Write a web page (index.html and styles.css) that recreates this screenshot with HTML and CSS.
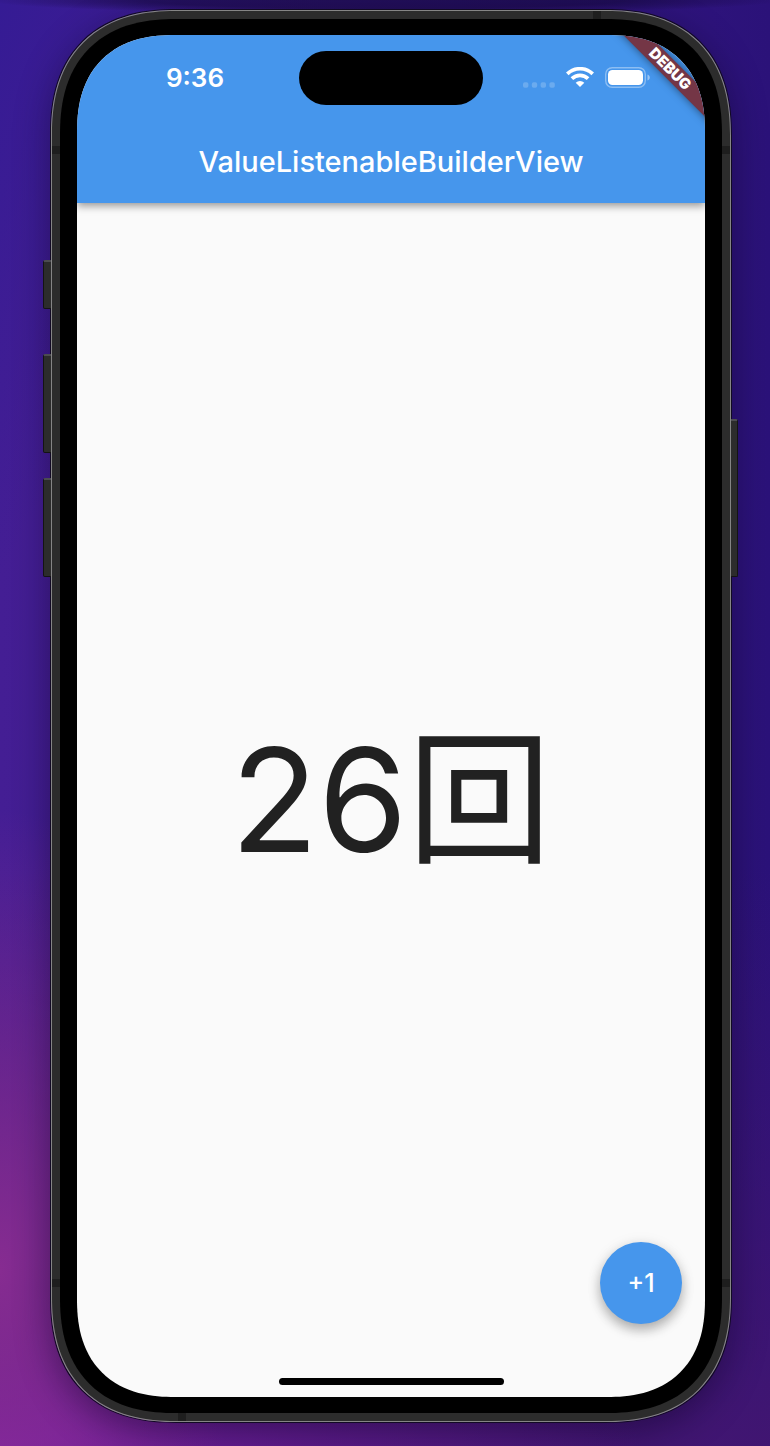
FILE: index.html
```html
<!DOCTYPE html>
<html lang="ja">
<head>
<meta charset="utf-8">
<meta name="viewport" content="width=device-width, initial-scale=1">
<title>ValueListenableBuilderView</title>
<link rel="stylesheet" href="styles.css">
</head>
<body>
<div class="desktop">
  <div class="phone">
    <span class="key key-action"></span>
    <span class="key key-up"></span>
    <span class="key key-down"></span>
    <span class="key key-power"></span>
    <div class="frame">
      <span class="antenna antenna-top"></span>
      <span class="antenna antenna-bottom"></span>
      <span class="antenna antenna-left-high"></span>
      <span class="antenna antenna-left-low"></span>
      <span class="antenna antenna-right-high"></span>
      <span class="antenna antenna-right-low"></span>
      <div class="bezel">
        <div class="screen">
          <header class="app-bar">
            <div class="status-bar">
              <time class="clock">9:36</time>
              <div class="island"></div>
              <div class="indicators">
                <svg class="cellular" width="32" height="6" viewBox="0 0 32 6" aria-hidden="true">
                  <rect x="0" y=".3" width="5.4" height="5.4" rx="1.8"/><rect x="8.8" y=".3" width="5.4" height="5.4" rx="1.8"/><rect x="17.6" y=".3" width="5.4" height="5.4" rx="1.8"/><rect x="26.4" y=".3" width="5.4" height="5.4" rx="1.8"/>
                </svg>
                <svg class="wifi" width="28" height="20" viewBox="0 0 28 20" aria-hidden="true">
                  <path d="M1.3 6.9a18.2 18.2 0 0 1 25.4 0M5.9 11.6a11.6 11.6 0 0 1 16.2 0" fill="none" stroke="#fff" stroke-width="3.7"/>
                  <path d="M14 20l-4.3-4.2a6.2 6.2 0 0 1 8.6 0z" fill="#fff"/>
                </svg>
                <svg class="battery" width="45" height="21" viewBox="0 0 45 21" aria-hidden="true">
                  <rect x=".7" y=".7" width="39.6" height="19.6" rx="6.5" fill="none" stroke="#fff" stroke-opacity=".38" stroke-width="1.4"/>
                  <rect x="3" y="3" width="35" height="15" rx="4.5" fill="#fff"/>
                  <path d="M42.5 7.5c3 1 3 5 0 6z" fill="#fff" fill-opacity=".45"/>
                </svg>
              </div>
            </div>
            <h1 class="title">ValueListenableBuilderView</h1>
          </header>
          <main class="content">
            <p class="count">26回</p>
          </main>
          <button class="fab" type="button">+1</button>
          <div class="home-indicator"></div>
          <div class="debug-banner">DEBUG</div>
        </div>
      </div>
    </div>
  </div>
</div>
</body>
</html>
```
FILE: styles.css
```css
* {
  box-sizing: border-box;
}

body {
  margin: 0;
  font-family: Inter, "Noto Sans CJK JP", sans-serif;
}

.desktop {
  display: flex;
  min-height: 100vh;
  padding: 10px 39px 24px 51px;
  overflow: hidden;
  background:
    radial-gradient(ellipse 400px 14px at 50% 0, rgba(20, 8, 60, 0.6) 60%, transparent),
    radial-gradient(ellipse 240px 460px at 0 1270px, rgba(138, 45, 146, 0.95), rgba(138, 45, 146, 0)),
    radial-gradient(ellipse 640px 160px at 0 100%, #7720a2, rgba(119, 32, 162, 0)),
    linear-gradient(to bottom, rgba(68, 22, 112, 0) 60%, rgba(68, 22, 112, 0.85)),
    linear-gradient(to bottom right, #351b94, rgba(53, 27, 148, 0) 20%),
    linear-gradient(to right, #441e94, #2b1279);
}

.phone {
  position: relative;
  display: flex;
  flex: 1;
  border-radius: 108px;
  box-shadow: 0 0 0 1px #120a24, 0 10px 36px rgba(10, 0, 30, 0.45);
}

.frame {
  position: relative;
  display: flex;
  flex: 1;
  padding: 8px;
  border: 1px solid #858585;
  border-radius: 108px;
  background: #2c2c2c;
}

.bezel {
  position: relative;
  display: flex;
  flex: 1;
  padding: 16px 17px;
  border-radius: 100px;
  background: #000;
}

.screen {
  position: relative;
  display: flex;
  flex: 1;
  flex-direction: column;
  overflow: hidden;
  border-radius: 84px;
  background: #fafafa;
}

/* Continuous corners where the browser can draw them */
@supports (corner-shape: superellipse(1.25)) {
  .phone,
  .frame,
  .bezel,
  .screen {
    corner-shape: superellipse(1.25);
  }

  .phone,
  .frame {
    border-radius: 126px;
  }

  .bezel {
    border-radius: 116px;
  }

  .screen {
    border-radius: 98px;
  }
}

.key {
  position: absolute;
  left: -8px;
  width: 9px;
  height: 99px;
  border: 1px solid #141414;
  border-top: 2px solid #4c4c50;
  border-radius: 2px 0 0 2px;
  background: #2c2c2c;
}

.key-action {
  top: 250px;
  height: 49px;
}

.key-up {
  top: 344px;
}

.key-down {
  top: 468px;
}

.key-power {
  top: 409px;
  right: -7px;
  left: auto;
  height: 158px;
  border-radius: 0 2px 2px 0;
}

.antenna {
  position: absolute;
  width: 8px;
  height: 8px;
  background: #1e1e1e;
}

.antenna-top {
  top: 0;
  right: 129px;
}

.antenna-bottom {
  bottom: 0;
  left: 126px;
}

.antenna-left-high {
  top: 135px;
  left: 0;
}

.antenna-left-low {
  bottom: 134px;
  left: 0;
}

.antenna-right-high {
  top: 135px;
  right: 0;
}

.antenna-right-low {
  right: 0;
  bottom: 134px;
}

.app-bar {
  color: #fff;
  background: #4696ec;
  box-shadow: 0 3px 8px rgba(0, 0, 0, 0.4);
}

.status-bar {
  display: grid;
  grid-template-columns: 1fr 184px 1fr;
  align-items: center;
  height: 86px;
}

.clock {
  padding-bottom: 2px;
  padding-left: 14px;
  font-size: 26px;
  font-weight: 600;
  text-align: center;
}

.island {
  height: 54px;
  border-radius: 27px;
  background: #000;
}

.indicators {
  display: flex;
  align-items: center;
  justify-content: center;
  gap: 11px;
  padding: 0 16px 2px 0;
}

.cellular {
  align-self: flex-end;
  fill: #fff;
  fill-opacity: 0.2;
}

.title {
  margin: 0;
  font-size: 29px;
  font-weight: 500;
  line-height: 82px;
  text-align: center;
}

.content {
  display: flex;
  flex: 1;
  align-items: center;
  justify-content: center;
}

.count {
  margin: 0;
  color: #212121;
  font-size: 144px;
  line-height: 176px;
}

.fab {
  position: absolute;
  right: 23px;
  bottom: 73px;
  width: 82px;
  height: 82px;
  padding: 0;
  border: 0;
  border-radius: 50%;
  color: #fff;
  background: #4696ec;
  box-shadow: 0 6px 12px rgba(0, 0, 0, 0.28), 0 2px 16px rgba(0, 0, 0, 0.08);
  font-family: Inter, sans-serif;
  font-size: 25px;
  font-weight: 500;
}

.home-indicator {
  position: absolute;
  right: 0;
  bottom: 12px;
  left: 0;
  width: 225px;
  height: 7px;
  margin: 0 auto;
  border-radius: 4px;
  background: #000;
}

.debug-banner {
  position: absolute;
  top: 25px;
  right: -65px;
  width: 200px;
  color: #fff;
  background: #743646;
  box-shadow: 0 0 8px rgba(0, 0, 0, 0.5);
  font-size: 15px;
  font-weight: 900;
  line-height: 18px;
  text-align: center;
  transform: rotate(45deg);
}
```
